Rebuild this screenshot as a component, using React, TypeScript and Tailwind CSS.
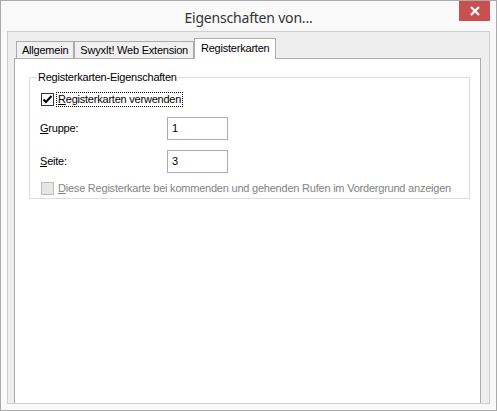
const Check = () => (
	<svg width="11" height="11" viewBox="0 0 11 11">
		<path d="M1.5 5.5 L4 8 L9.5 2" fill="none" stroke="#000" strokeWidth="2" />
	</svg>
);

const Tab = ({ label, active }: { label: string; active?: boolean }) => (
	<div
		className={
			active
				? 'relative z-10 h-[21px] -mb-px bg-white border border-b-0 border-[#acacac] px-[6px] pt-[3px] text-black'
				: 'h-[17px] bg-[#f0f0f0] border border-b-0 border-[#acacac] px-[5px] pt-[2px] text-black'
		}
	>
		{label}
	</div>
);

const App = () => {
	return (
		<div className="w-[497px] h-[411px] border border-[#aaaaaa] bg-[#f9f9f9] flex flex-col" style={{ fontFamily: '"Liberation Sans", Arial, sans-serif' }}>
			{/* title bar */}
			<div className="h-[30px] grid grid-cols-[1fr_auto_1fr]">
				<div />
				<div className="pt-[6px] text-[14px] tracking-[-0.2px] text-[#333333]" style={{ fontFamily: '"Noto Sans", sans-serif' }}>Eigenschaften von...</div>
				<div className="flex justify-end pr-[6px]">
					<button className="w-[31px] h-[20px] bg-[#c75050] flex items-center justify-center">
						<svg width="10" height="10" viewBox="0 0 10 10">
							<path d="M1 1 L9 9 M9 1 L1 9" stroke="#fff" strokeWidth="2.2" />
						</svg>
					</button>
				</div>
			</div>

			{/* dialog body */}
			<div className="flex-1 mx-[6px] mb-[6px] border border-[#cfcfcf] bg-[#eeeeee] pl-[6px] pr-[8px] pt-[6px] flex flex-col text-[11px] leading-[13px] tracking-[-0.22px]">
				<div className="flex items-end pl-[2px]">
					<Tab label="Allgemein" />
					<Tab label="SwyxIt! Web Extension" />
					<Tab label="Registerkarten" active />
				</div>
				<div className="flex-1 bg-white border border-b-0 border-[#acacac] pl-[14px] pr-[10px] pt-[12px]">
					<fieldset className="border border-[#dcdcdc] pb-[2px]">
						<legend className="ml-[7px] px-[1px] text-black">Registerkarten-Eigenschaften</legend>
						<div className="pl-[11px]">
							<label className="flex items-center h-[15px] mt-[8px]">
								<span className="w-[13px] h-[13px] border border-[#333333] bg-white flex items-center justify-center">
									<Check />
								</span>
								<span className="ml-[3px] px-[1px] outline outline-1 outline-dotted outline-black">
									<u>R</u>egisterkarten verwenden
								</span>
							</label>
							<div className="flex items-center mt-[10px] h-[23px]">
								<span className="w-[127px] -ml-px"><u>G</u>ruppe:</span>
								<div className="w-[61px] h-[23px] border border-[#acacac] pl-[4px] flex items-center">1</div>
							</div>
							<div className="flex items-center mt-[10px] h-[23px]">
								<span className="w-[127px] -ml-px"><u>S</u>eite:</span>
								<div className="w-[61px] h-[23px] border border-[#acacac] pl-[4px] flex items-center">3</div>
							</div>
							<label className="flex items-center h-[15px] mt-[8px] text-[#838383]">
								<span className="w-[13px] h-[13px] border border-[#bcbcbc] bg-[#e6e6e6]" />
								<span className="ml-[3px] px-[1px]">
									<u>D</u>iese Registerkarte bei kommenden und gehenden Rufen im Vordergrund anzeigen
								</span>
							</label>
						</div>
					</fieldset>
				</div>
			</div>
		</div>
	);
};

export default App;
